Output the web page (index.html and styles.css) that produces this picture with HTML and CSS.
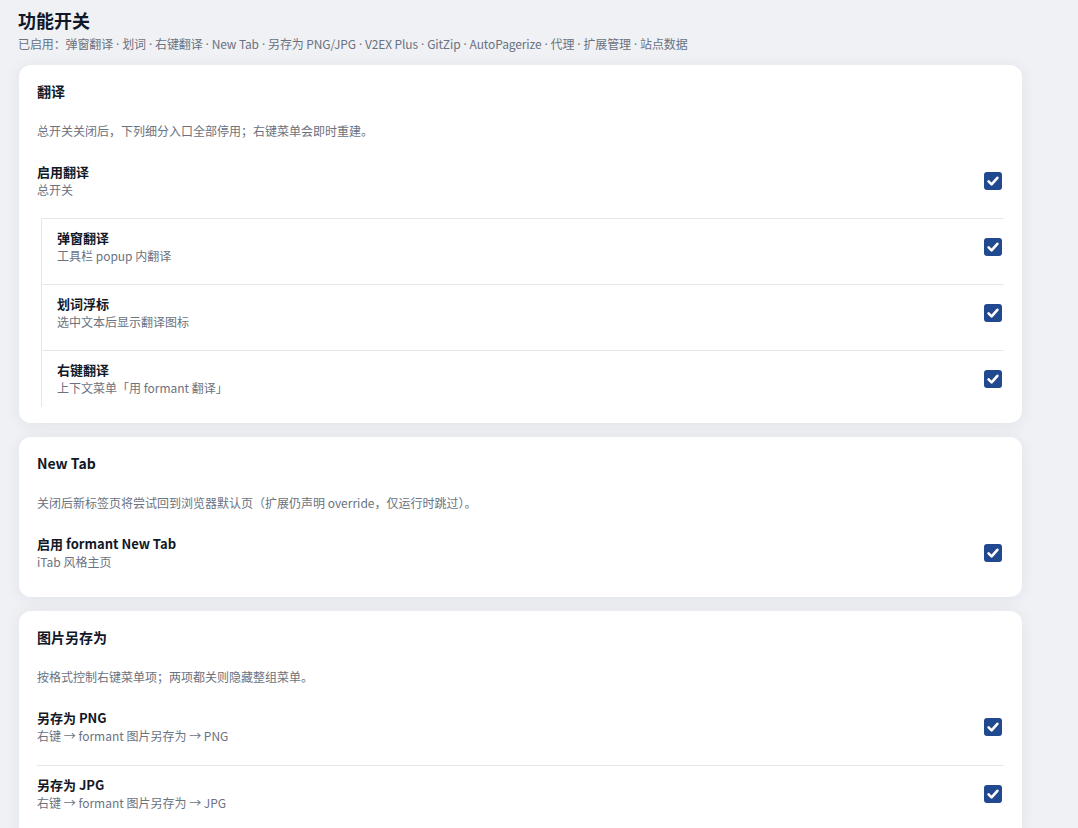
FILE: index.html
```html
<!DOCTYPE html>
<html lang="zh-CN">
<head>
  <meta charset="UTF-8">
  <title>功能开关</title>
  <link rel="stylesheet" href="styles.css">
</head>
<body>

  <div class="page">
    <h1 class="page-title">功能开关</h1>
    <p class="page-sub">已启用：弹窗翻译<span class="dot"> · </span>划词<span class="dot"> · </span>右键翻译<span class="dot"> · </span>New Tab<span class="dot"> · </span>另存为 PNG/JPG<span class="dot"> · </span>V2EX Plus<span class="dot"> · </span>GitZip<span class="dot"> · </span>AutoPagerize<span class="dot"> · </span>代理<span class="dot"> · </span>扩展管理<span class="dot"> · </span>站点数据</p>

    <!-- 翻译 -->
    <section class="card">
      <h2 class="card-title">翻译</h2>
      <p class="card-desc">总开关关闭后，下列细分入口全部停用；右键菜单会即时重建。</p>

      <div class="row">
        <div class="row-text">
          <div class="row-label">启用翻译</div>
          <div class="row-hint">总开关</div>
        </div>
        <svg class="check" viewBox="0 0 18 18"><rect width="18" height="18" rx="3"/><path d="M4.6 9.4l3 3 5.8-6.6"/></svg>
      </div>

      <div class="sub-group">
        <div class="sub-row">
          <div class="row-text">
            <div class="row-label">弹窗翻译</div>
            <div class="row-hint">工具栏 popup 内翻译</div>
          </div>
          <svg class="check" viewBox="0 0 18 18"><rect width="18" height="18" rx="3"/><path d="M4.6 9.4l3 3 5.8-6.6"/></svg>
        </div>
        <div class="sub-row">
          <div class="row-text">
            <div class="row-label">划词浮标</div>
            <div class="row-hint">选中文本后显示翻译图标</div>
          </div>
          <svg class="check" viewBox="0 0 18 18"><rect width="18" height="18" rx="3"/><path d="M4.6 9.4l3 3 5.8-6.6"/></svg>
        </div>
        <div class="sub-row">
          <div class="row-text">
            <div class="row-label">右键翻译</div>
            <div class="row-hint">上下文菜单「用 formant 翻译」</div>
          </div>
          <svg class="check" viewBox="0 0 18 18"><rect width="18" height="18" rx="3"/><path d="M4.6 9.4l3 3 5.8-6.6"/></svg>
        </div>
      </div>
    </section>

    <!-- New Tab -->
    <section class="card">
      <h2 class="card-title">New Tab</h2>
      <p class="card-desc">关闭后新标签页将尝试回到浏览器默认页（扩展仍声明 override，仅运行时跳过）。</p>

      <div class="row">
        <div class="row-text">
          <div class="row-label">启用 formant New Tab</div>
          <div class="row-hint">iTab 风格主页</div>
        </div>
        <svg class="check" viewBox="0 0 18 18"><rect width="18" height="18" rx="3"/><path d="M4.6 9.4l3 3 5.8-6.6"/></svg>
      </div>
    </section>

    <!-- 图片另存为 -->
    <section class="card">
      <h2 class="card-title">图片另存为</h2>
      <p class="card-desc">按格式控制右键菜单项；两项都关则隐藏整组菜单。</p>

      <div class="row">
        <div class="row-text">
          <div class="row-label">另存为 PNG</div>
          <div class="row-hint">右键 → formant 图片另存为 → PNG</div>
        </div>
        <svg class="check" viewBox="0 0 18 18"><rect width="18" height="18" rx="3"/><path d="M4.6 9.4l3 3 5.8-6.6"/></svg>
      </div>
      <div class="row">
        <div class="row-text">
          <div class="row-label">另存为 JPG</div>
          <div class="row-hint">右键 → formant 图片另存为 → JPG</div>
        </div>
        <svg class="check" viewBox="0 0 18 18"><rect width="18" height="18" rx="3"/><path d="M4.6 9.4l3 3 5.8-6.6"/></svg>
      </div>
    </section>
  </div>

</body>
</html>
```

FILE: styles.css
```css
body {
  margin: 0;
  background: #eff1f5;
  font-family: "Noto Sans CJK SC", "Noto Sans", sans-serif;
  color: #111827;
}

.page {
  width: 1003px;
  padding: 8px 0 0 19px;
}

.page-title {
  margin: 0 0 0 -1px;
  font-size: 18px;
  line-height: 24px;
  font-weight: 700;
  color: #111827;
}

.page-sub {
  margin: 3px 0 11px -1px;
  font-size: 12px;
  line-height: 18px;
  letter-spacing: -0.12px;
  color: #6b7280;
}

/* 半角间隔点 */
.dot {
  font-family: "Noto Sans", sans-serif;
}

/* 卡片 */
.card {
  background: #fff;
  border-radius: 12px;
  box-shadow: 0 2px 16px rgba(30, 41, 59, 0.07);
  padding: 16px 18px;
  margin-bottom: 14px;
}

.card-title {
  margin: 0;
  font-size: 14px;
  line-height: 20px;
  font-weight: 700;
}

.card-desc {
  margin: 21px 0 13px;
  font-size: 12px;
  line-height: 18px;
  color: #6b7280;
}

/* 开关行 */
.row,
.sub-row {
  display: flex;
  align-items: center;
  justify-content: space-between;
  padding: 10px 0;
}

.row + .row {
  margin-top: 10px;
  border-top: 1px solid #e5e7eb;
}

.row-label {
  font-size: 13px;
  line-height: 18px;
  font-weight: 700;
  color: #111827;
}

.row-hint {
  font-size: 12px;
  line-height: 18px;
  color: #6b7280;
}

.sub-group {
  margin: 9px 0 0 4px;
  border-left: 1px solid #e5e7eb;
}

.sub-row {
  border-top: 1px solid #e5e7eb;
  padding-left: 15px;
}

.sub-row + .sub-row {
  margin-top: 9px;
}

/* 勾选框 */
.check {
  width: 18px;
  height: 18px;
  margin-right: 2px;
  flex-shrink: 0;
}

.check rect {
  fill: #21498f;
}

.check path {
  fill: none;
  stroke: #fff;
  stroke-width: 2.6;
  stroke-linecap: round;
  stroke-linejoin: round;
}
```
